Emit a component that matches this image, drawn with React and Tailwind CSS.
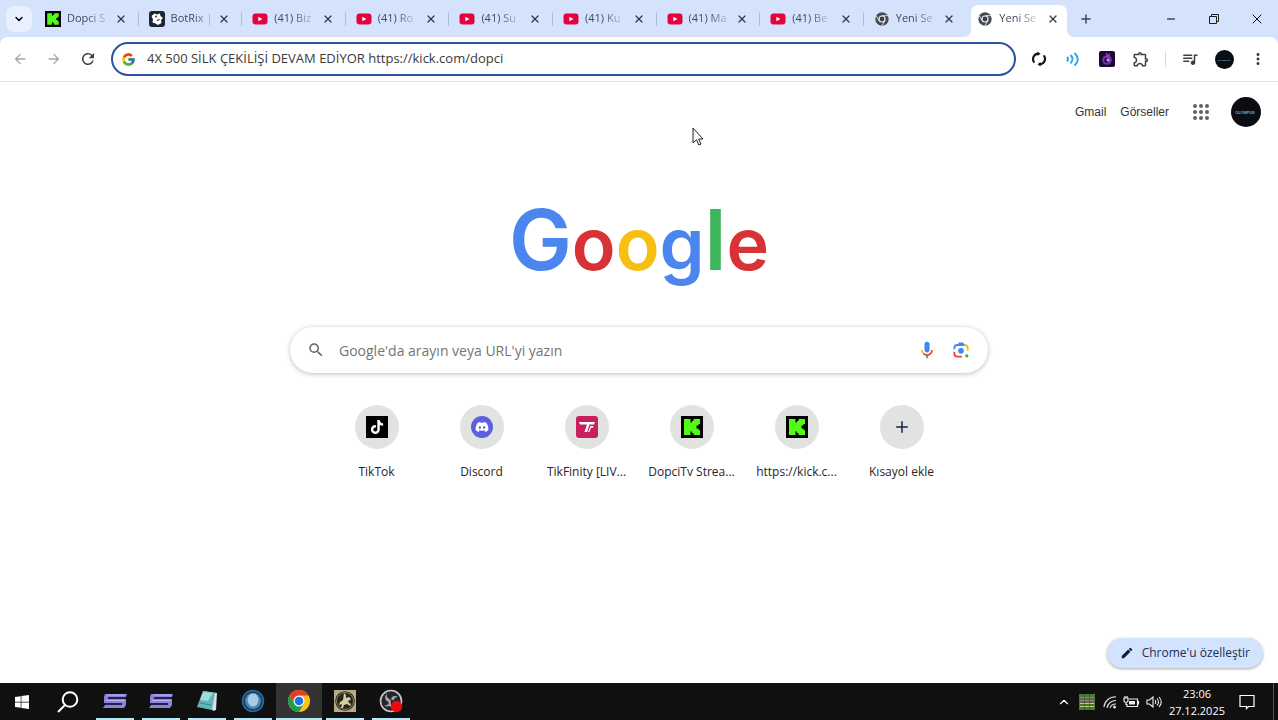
import { useState } from "react";
import { FcGoogle } from "react-icons/fc";
import { FaDiscord, FaTiktok, FaWindows } from "react-icons/fa";
import {
  MdArrowBack,
  MdArrowForward,
  MdEdit,
  MdMoreVert,
  MdOutlineExtension,
  MdQueueMusic,
  MdRefresh,
  MdSearch,
} from "react-icons/md";
import { ChevronDown, ChevronUp, Minus, Plus, X } from "lucide-react";

const KickIcon = ({ className }) => (
  <svg viewBox="0 0 22 22" className={className}>
    <path fill="#000" d="M0 0h22v22H0z" />
    <path
      fill="#53fc18"
      d="M3 3h6.500v3.500h1.500V5h1.500V3H19v5h-1.500v1.500H15.500v3h2V14H19v5h-6.500v-2H11v-1.500H9.500V19H3z"
    />
  </svg>
);

const BotRixIcon = ({ className }) => (
  <svg viewBox="0 0 16 16" className={className}>
    <rect width="16" height="16" rx="3" fill="#20242f" />
    <path fill="#fff" d="M2.500 5l3-2.500 2.500 1 3-1 .5 2.500 2.500 2-2 2 .5 3-3.500 2-2.500-1.500-3-1 .5-3z" />
    <circle cx="7" cy="5.500" r="0.900" fill="#20242f" />
    <path stroke="#20242f" strokeWidth="1.200" d="M8 9.500l2.500-1" />
  </svg>
);

const YoutubeIcon = ({ className }) => (
  <svg viewBox="0 0 16 16" className={className}>
    <rect x="0.500" y="2.500" width="15" height="11" rx="3" fill="#e6003c" />
    <path fill="#fff" d="M6.300 5.700v4.600l4.200-2.300z" />
  </svg>
);

const ChromeGreyIcon = ({ className }) => (
  <svg viewBox="0 0 16 16" className={className}>
    <circle cx="8" cy="8" r="6.700" fill="#474b50" />
    <circle cx="8" cy="8" r="3.600" fill="#e8edf6" />
    <circle cx="8" cy="8" r="2.400" fill="#3c4043" />
    <path
      stroke="#e8edf6"
      strokeWidth="0.900"
      fill="none"
      d="M8 4.700h6M5.100 9.600L2.100 4.500M10.900 9.600l-3 5.100"
    />
  </svg>
);

const ChromeIcon = ({ className }) => (
  <svg viewBox="0 0 24 24" className={className}>
    <circle cx="12" cy="12" r="12" fill="#fbc116" />
    <path fill="#e33b2e" d="M1.600 6A12 12 0 0 1 22.400 6H12l-5.200 9z" />
    <path fill="#229b48" d="M1.600 6A12 12 0 0 0 12 24l5.200-9H6.800z" />
    <circle cx="12" cy="12" r="6" fill="#fff" />
    <circle cx="12" cy="12" r="4.700" fill="#1a73e8" />
  </svg>
);

const SyncIcon = () => (
  <svg viewBox="0 0 16 16" className="size-4" fill="none" stroke="#161616" strokeWidth="2.200">
    <path d="M3.300 11.600A5.500 5.500 0 0 1 7.300 2.600M12.700 4.400A5.500 5.500 0 0 1 8.700 13.400" />
    <path d="M6.500 0.500v4.400l3-2.200zM9.500 11.100v4.400l-3-2.200z" fill="#161616" stroke="none" />
  </svg>
);

const WavesIcon = () => (
  <svg viewBox="0 0 16 16" className="size-4" fill="none" stroke="#2b9fea" strokeWidth="1.800">
    <path d="M2 6q2 2 0 4.500M5.500 4q4 4 0 8.500M9.500 2q6.500 6 0 12.500" />
  </svg>
);

const PurpleIcon = () => (
  <svg viewBox="0 0 16 16" className="size-4">
    <rect width="16" height="16" rx="2" fill="#1b0b30" />
    <circle cx="8" cy="9" r="4.800" fill="#7a2fb0" />
    <circle cx="7.500" cy="9.500" r="2.400" fill="#2a1045" />
    <path d="M7 2l2 3M11 3l-3 3" stroke="#a546dc" strokeWidth="1.200" />
    <circle cx="9" cy="9" r="1.500" fill="#d58aff" />
  </svg>
);

const RestoreIcon = () => (
  <svg viewBox="0 0 12 12" className="size-3" fill="none" stroke="#1f1f1f">
    <path d="M1.500 3.500h7v7h-7zM3.500 3.500v-2h7v7h-2" />
  </svg>
);

const MicIcon = () => (
  <svg viewBox="0 0 24 24" className="size-5">
    <path fill="#4285f4" d="M12 15c1.700 0 3-1.300 3-3V5a3 3 0 0 0-6 0v7c0 1.700 1.300 3 3 3z" />
    <path fill="#34a853" d="M11 18.900h2V22h-2z" />
    <path fill="#fbbc04" d="M7 12H5c0 1.900.8 3.700 2.100 5l1.400-1.400A5 5 0 0 1 7 12z" />
    <path fill="#ea4335" d="M12 17a5 5 0 0 1-3.500-1.400L7.100 17A7 7 0 0 0 19 12h-2a5 5 0 0 1-5 5z" />
  </svg>
);

const LensIcon = () => (
  <svg viewBox="0 0 24 24" className="size-5" fill="none" strokeWidth="2.200">
    <path stroke="#4285f4" d="M4 11V9.500A3.500 3.500 0 0 1 7.500 6h9" />
    <path fill="#4285f4" d="M8 5.500L9.500 3h5L16 5.500z" />
    <path stroke="#fbbc04" d="M16.500 6A3.500 3.500 0 0 1 20 9.500V13" />
    <path stroke="#ea4335" d="M4 14v2.500A3.500 3.500 0 0 0 7.500 20H13" />
    <circle cx="12" cy="13" r="3.400" fill="#4285f4" />
    <circle cx="19" cy="19" r="2" fill="#34a853" />
  </svg>
);

const TikfinityIcon = () => (
  <svg viewBox="0 0 22 22" className="size-[22px]">
    <rect width="22" height="22" rx="3" fill="#c8205c" />
    <path fill="#fff" d="M3 6h16l-1 2.500h-4.500L11 16H8.500l2.500-7.500H4zM14.500 10h3l-.7 1.800h-1.800L13.300 16H12z" />
  </svg>
);

const OlympusAvatar = ({ small }) => (
  <svg viewBox="0 0 30 30" className={small ? "size-[19px]" : "size-[30px]"}>
    <circle cx="15" cy="15" r="15" fill="#0b0d10" />
    <text
      x="14"
      y="17"
      textAnchor="middle"
      fontSize="4"
      fontWeight="700"
      fontFamily="Liberation Sans, sans-serif"
      fill="#55b8ea"
    >
      OLYMPUS
    </text>
  </svg>
);

const PurpleSIcon = () => (
  <svg viewBox="0 0 24 16" className="h-4 w-6">
    <path fill="#8b82dd" d="M2 1h22l-1 3H5v2h18v6l-2 3H0l2-3h17v-2H1V4z" />
    <path stroke="#3b3480" d="M5 5h17M2 11h17" />
    <path stroke="#c5c0f5" strokeWidth="0.800" d="M4 2h18M3 7.500h19" />
  </svg>
);

const NotepadIcon = () => (
  <svg viewBox="0 0 22 22" className="size-[22px]">
    <path fill="#d9e4e2" d="M7 1l14 2-1 17-3 1z" />
    <path fill="#61b4b8" d="M7 1l12 2-3 17-15-3z" />
    <path fill="#9ddcdb" d="M7 2l10 1-5 8-8-1z" />
    <path stroke="#38878c" d="M4 13l11 2" />
  </svg>
);

const BlueDiscIcon = () => (
  <svg viewBox="0 0 24 24" className="size-6">
    <circle cx="12" cy="12" r="10.500" fill="#173f67" stroke="#2c6d9b" strokeWidth="1.500" />
    <circle cx="12" cy="12" r="8" fill="#4787b5" />
    <ellipse cx="12" cy="11" rx="5.500" ry="6.500" fill="#a6cbe5" />
  </svg>
);

const KnightIcon = () => (
  <svg viewBox="0 0 22 22" className="size-[22px]">
    <path fill="#b5ac83" d="M0 0h22v22H0z" />
    <circle cx="11" cy="11" r="9.800" fill="#27251b" />
    <circle cx="11" cy="11" r="8.500" fill="none" stroke="#8b8461" />
    <path
      fill="#d3cba2"
      d="M10 3l2 2v3l3-1 2 2-1 1-2 1 1 2 2 1-1 2-3-2-3 1-1 3H7l1-4-3 1 1-3 3-2z"
    />
  </svg>
);

const ObsIcon = () => (
  <svg viewBox="0 0 24 24" className="size-6">
    <circle cx="12" cy="12" r="10.500" fill="#26262a" stroke="#c8c8cc" strokeWidth="1.600" />
    <path
      fill="#a9a9ae"
      d="M8 4c-1 3 0 5 3 6.500l1 1.500c-1 3 0 5 3 6-4 1-6-2-5.500-5.500C6 12 5 8 8 4zM12 10c1-3 4-4 7-2-2 0-4 1-4.500 3.500zM5 16c2 1 4 0 5-2l1 2c-2 2-4 2-6 0z"
    />
    <circle cx="17.500" cy="17.500" r="5.700" fill="#ee0a0a" />
  </svg>
);

const TaskSearchIcon = () => (
  <svg viewBox="0 0 22 22" className="size-[22px]" fill="none" stroke="#fff" strokeWidth="2">
    <circle cx="13" cy="8.500" r="7.300" />
    <path d="M8 14l-7 7" />
  </svg>
);

const GridTrayIcon = () => (
  <svg viewBox="0 0 16 16" className="size-4">
    <path fill="#46783c" d="M0 0h16v16H0z" />
    <path stroke="#c8648c" d="M1 3.500h14M1 6.500h14" />
    <path stroke="#d2cc5a" d="M1 9.500h14M1 12.500h14" />
    <path stroke="#2a4a24" strokeWidth="0.500" d="M5.500 0v16M10.500 0v16" />
  </svg>
);

const WifiIcon = () => (
  <svg viewBox="0 0 14 14" className="size-3.5" fill="none" stroke="#ddd" strokeWidth="1.200">
    <path d="M1 12A11 11 0 0 1 13 2M4 13a9 9 0 0 1 9-7.500M7 13a6 6 0 0 1 6-4" />
    <circle cx="11.500" cy="12" r="1.500" fill="#ddd" stroke="none" />
  </svg>
);

const BatteryIcon = () => (
  <svg viewBox="0 0 17 12" className="h-3 w-[17px]" fill="none" stroke="#eee" strokeWidth="1.200">
    <path d="M6 3h8.500v7.500H4V8M15.500 5v3.500M1 2h4v2.500a2 2 0 0 1-4 0zM2 2V0M4 2V0M3 6.500V9" />
    <path fill="#eee" stroke="none" d="M6 5h6v3.500H6z" />
  </svg>
);

const SpeakerIcon = () => (
  <svg viewBox="0 0 17 14" className="h-3.5 w-[17px]" fill="none" stroke="#eee" strokeWidth="1.100">
    <path d="M1 5h2.500L7 2v10L3.500 9H1zM9 5q1.500 2 0 4M11 3.500q3 3.500 0 7M13 2q4.500 5 0 10" />
  </svg>
);

const NoticeIcon = () => (
  <svg viewBox="0 0 16 16" className="size-4" fill="none" stroke="#fff" strokeWidth="1.200">
    <path d="M1 1.500h14v11H9.500l-2 2v-2H1z" />
  </svg>
);

const tabs = [
  { id: 1, title: "Dopci S", Icon: KickIcon },
  { id: 2, title: "BotRix |", Icon: BotRixIcon },
  { id: 3, title: "(41) Biz", Icon: YoutubeIcon },
  { id: 4, title: "(41) Ro", Icon: YoutubeIcon },
  { id: 5, title: "(41) Su", Icon: YoutubeIcon },
  { id: 6, title: "(41) Ku", Icon: YoutubeIcon },
  { id: 7, title: "(41) Ma", Icon: YoutubeIcon },
  { id: 8, title: "(41) Be", Icon: YoutubeIcon },
  { id: 9, title: "Yeni Se", Icon: ChromeGreyIcon },
  { id: 10, title: "Yeni Se", Icon: ChromeGreyIcon },
];

const shortcuts = [
  {
    label: "TikTok",
    icon: (
      <span className="flex size-[22px] items-center justify-center bg-black">
        <FaTiktok className="size-3.5 text-white" />
      </span>
    ),
  },
  {
    label: "Discord",
    icon: (
      <span className="flex size-[22px] items-center justify-center rounded-full bg-[#5b5fe0]">
        <FaDiscord className="size-3.5 text-white" />
      </span>
    ),
  },
  { label: "TikFinity [LIV...", icon: <TikfinityIcon /> },
  { label: "DopciTv Strea...", icon: <KickIcon className="size-[22px]" /> },
  { label: "https://kick.c...", icon: <KickIcon className="size-[22px]" /> },
];

const apps = [
  { name: "Silk 1", Icon: PurpleSIcon },
  { name: "Silk 2", Icon: PurpleSIcon },
  { name: "Notepad", Icon: NotepadIcon },
  { name: "Disc", Icon: BlueDiscIcon },
  { name: "Chrome", Icon: ChromeIcon, active: true },
  { name: "Knight", Icon: KnightIcon },
  { name: "OBS", Icon: ObsIcon },
];

const ToolButton = ({ label, children }) => (
  <button aria-label={label} className="flex size-[34px] shrink-0 items-center justify-center rounded-full">
    {children}
  </button>
);

const TabStrip = () => {
  const [activeTab, setActiveTab] = useState(10);

  return (
    <header className="flex h-[37px] items-stretch bg-[#d5e2fc]">
      <div className="flex w-[35px] shrink-0 items-center pl-[6px]">
        <button
          aria-label="Sekme ara"
          className="flex size-[26px] items-center justify-center rounded-lg bg-[#e8f0fe]"
        >
          <ChevronDown className="size-3 text-black" strokeWidth={3} />
        </button>
      </div>
      <div className="flex w-[1036px] min-w-0">
        {tabs.map(({ id, title, Icon }) => {
          const active = id === activeTab;
          return (
            <div key={id} className="relative flex min-w-0 flex-1 items-center px-[10px]">
              {active && (
                <svg viewBox="0 0 112 32" preserveAspectRatio="none" className="absolute bottom-0 -left-1 h-8 w-[112px]">
                  <path fill="#fff" d="M0 32q8 0 8-8V8q0-8 8-8h80q8 0 8 8v16q0 8 8 8z" />
                </svg>
              )}
              <button
                onClick={() => setActiveTab(id)}
                className="relative flex flex-1 items-center gap-[6px]"
              >
                <Icon className="size-4 shrink-0" />
                <span className="text-[11px] whitespace-nowrap text-[#3f495e] [mask-image:linear-gradient(to_right,black_50%,rgba(0,0,0,0.25))]">
                  {title}
                </span>
              </button>
              <button aria-label="Kapat" className="relative flex size-4 shrink-0 items-center justify-center">
                <X className="size-3 text-[#30384a]" strokeWidth={2.5} />
              </button>
              {!active && id !== activeTab - 1 && (
                <span className="absolute top-3 right-0 h-[14px] w-px bg-[#a9bfe0]" />
              )}
            </div>
          );
        })}
      </div>
      <button aria-label="Yeni sekme" className="flex w-[30px] shrink-0 items-center justify-center">
        <Plus className="size-[14px] text-[#3c4556]" strokeWidth={2.5} />
      </button>
      <div className="ml-auto flex shrink-0">
        <button aria-label="Simge durumuna küçült" className="flex w-[43px] items-center justify-center">
          <Minus className="size-3 text-black" />
        </button>
        <button aria-label="Geri yükle" className="flex w-[43px] items-center justify-center">
          <RestoreIcon />
        </button>
        <button aria-label="Pencereyi kapat" className="flex w-[43px] items-center justify-center">
          <X className="size-4 text-black" strokeWidth={1.500} />
        </button>
      </div>
    </header>
  );
};

const Toolbar = () => (
  <div className="bg-[#d5e2fc]">
    <div className="flex h-[45px] items-center rounded-t-lg border-b border-[#e3e5e9] bg-white px-[3px]">
      <ToolButton label="Geri">
        <MdArrowBack className="size-4 text-[#a2a5a9]" />
      </ToolButton>
      <ToolButton label="İleri">
        <MdArrowForward className="size-4 text-[#a2a5a9]" />
      </ToolButton>
      <ToolButton label="Yenile">
        <MdRefresh className="size-[18px] text-[#3c4043]" />
      </ToolButton>
      <label className="mx-[6px] flex h-[34px] min-w-0 flex-1 items-center gap-[11px] rounded-full border-2 border-[#2b54a0] bg-white pl-2">
        <FcGoogle className="size-[15px] shrink-0" />
        <input
          aria-label="Adres çubuğu"
          defaultValue="4X 500 SİLK ÇEKİLİŞİ DEVAM EDİYOR https://kick.com/dopci"
          className="min-w-0 flex-1 bg-transparent text-[13px] text-[#3a3a3a] outline-none"
        />
      </label>
      <ToolButton label="Eşitle">
        <SyncIcon />
      </ToolButton>
      <ToolButton label="Ses">
        <WavesIcon />
      </ToolButton>
      <ToolButton label="Uzantı">
        <PurpleIcon />
      </ToolButton>
      <ToolButton label="Uzantılar">
        <MdOutlineExtension className="size-[18px] text-[#3c4043]" />
      </ToolButton>
      <span className="mx-[7px] h-4 w-px bg-[#d3dcec]" />
      <ToolButton label="Medya">
        <MdQueueMusic className="size-[18px] text-[#3c4043]" />
      </ToolButton>
      <ToolButton label="Profil">
        <OlympusAvatar small />
      </ToolButton>
      <ToolButton label="Menü">
        <MdMoreVert className="size-[18px] text-[#3c4043]" />
      </ToolButton>
    </div>
  </div>
);

const NewTabPage = () => (
  <main className="relative flex flex-1 flex-col items-center bg-white">
    <nav className="flex h-[60px] w-full items-center justify-end pr-[17px] font-['Liberation_Sans',sans-serif] text-xs text-[#333]">
      <a href="#gmail">Gmail</a>
      <a href="#gorseller" className="ml-[14px]">
        Görseller
      </a>
      <button aria-label="Google uygulamaları" className="ml-6 grid grid-cols-3 gap-[2px]">
        {[...Array(9)].map((_, i) => (
          <span key={i} className="size-1 rounded-full bg-[#5f6368]" />
        ))}
      </button>
      <button aria-label="Google hesabı" className="ml-[22px]">
        <OlympusAvatar />
      </button>
    </nav>

    <h1 className="mt-14 h-[92px] font-['Inter',sans-serif] text-[72px] leading-[84px] font-semibold">
      <span className="text-[84px] text-[#4a86ee]">G</span>
      <span className="text-[#d93236]">o</span>
      <span className="text-[#f6bf12]">o</span>
      <span className="text-[#4a86ee]">g</span>
      <span className="text-[84px] text-[#40b65a]">l</span>
      <span className="text-[#d93236]">e</span>
    </h1>

    <form
      onSubmit={(e) => e.preventDefault()}
      className="mt-[37px] flex h-[46px] w-full max-w-[698px] items-center rounded-full bg-white px-[17px] shadow-[0_1px_5px_rgba(32,33,36,0.3)]"
    >
      <MdSearch className="size-[18px] shrink-0 text-[#5f6368]" />
      <input
        aria-label="Ara"
        placeholder="Google'da arayın veya URL'yi yazın"
        className="ml-[14px] min-w-0 flex-1 bg-transparent text-[14px] text-[#202124] outline-none placeholder:text-[#757575]"
      />
      <button type="button" aria-label="Sesli arama">
        <MicIcon />
      </button>
      <button type="button" aria-label="Görselle arama" className="ml-[14px]">
        <LensIcon />
      </button>
    </form>

    <div className="mt-8 flex justify-center">
      {shortcuts.map((s) => (
        <a key={s.label} href="#kisayol" className="flex w-[105px] flex-col items-center">
          <span className="flex size-11 items-center justify-center rounded-full bg-[#e1e3e1]">{s.icon}</span>
          <span className="mt-[14px] text-xs leading-[18px] whitespace-nowrap text-[#262626]">{s.label}</span>
        </a>
      ))}
      <button className="flex w-[105px] flex-col items-center">
        <span className="flex size-11 items-center justify-center rounded-full bg-[#e1e3e1]">
          <Plus className="size-[18px] text-[#1b2144]" />
        </span>
        <span className="mt-[14px] text-xs leading-[18px] whitespace-nowrap text-[#262626]">Kısayol ekle</span>
      </button>
    </div>

    <button className="mt-auto mr-[15px] mb-[15px] flex h-[30px] items-center gap-2 self-end rounded-full bg-[#d3e3fd] px-[13px] text-xs text-[#1a2f55] shadow-[0_1px_3px_rgba(0,0,0,0.35)]">
      <MdEdit className="size-[14px] text-[#0b1b3b]" />
      Chrome'u özelleştir
    </button>

    {/* Mouse pointer */}
    <svg viewBox="0 0 12 19" className="absolute top-[45px] left-[692px] h-[19px] w-3">
      <path fill="#fff" stroke="#222" d="M1 1v15l3.500-3.300 2.300 5.300 2.200-1-2.300-5H11z" />
    </svg>
  </main>
);

const Taskbar = () => (
  <footer className="flex h-[37px] shrink-0 items-stretch bg-[#101010] text-white">
    <button aria-label="Başlat" className="flex w-11 items-center justify-center">
      <FaWindows className="size-4" />
    </button>
    <button aria-label="Ara" className="flex w-12 items-center justify-center">
      <TaskSearchIcon />
    </button>
    {apps.map(({ name, Icon, active }) => (
      <button
        key={name}
        aria-label={name}
        className={`flex w-[46px] flex-col items-center ${active ? "bg-[#333333]" : ""}`}
      >
        <span className="flex flex-1 items-center">
          <Icon className="size-[22px]" />
        </span>
        <span className={`h-[2px] bg-[#b4e8f7] ${active ? "w-full" : "w-[38px]"}`} />
      </button>
    ))}
    <div className="ml-auto flex items-center">
      <button aria-label="Gizli simgeler" className="mr-2">
        <ChevronUp className="size-[14px]" />
      </button>
      <GridTrayIcon />
      <div className="ml-2 flex items-center gap-[6px]">
        <WifiIcon />
        <BatteryIcon />
        <SpeakerIcon />
      </div>
      <div className="ml-[6px] text-center text-[11px] leading-[17px]">
        <div>23:06</div>
        <div>27.12.2025</div>
      </div>
      <button aria-label="Bildirimler" className="mr-[18px] ml-[14px]">
        <NoticeIcon />
      </button>
      <span className="mr-1 h-full w-px bg-[#555]" />
    </div>
  </footer>
);

const App = () => {
  return (
    <div className="flex min-h-screen flex-col overflow-x-hidden bg-white font-['Open_Sans','Noto_Sans',sans-serif]">
      <TabStrip />
      <Toolbar />
      <NewTabPage />
      <Taskbar />
    </div>
  );
};

export default App;
